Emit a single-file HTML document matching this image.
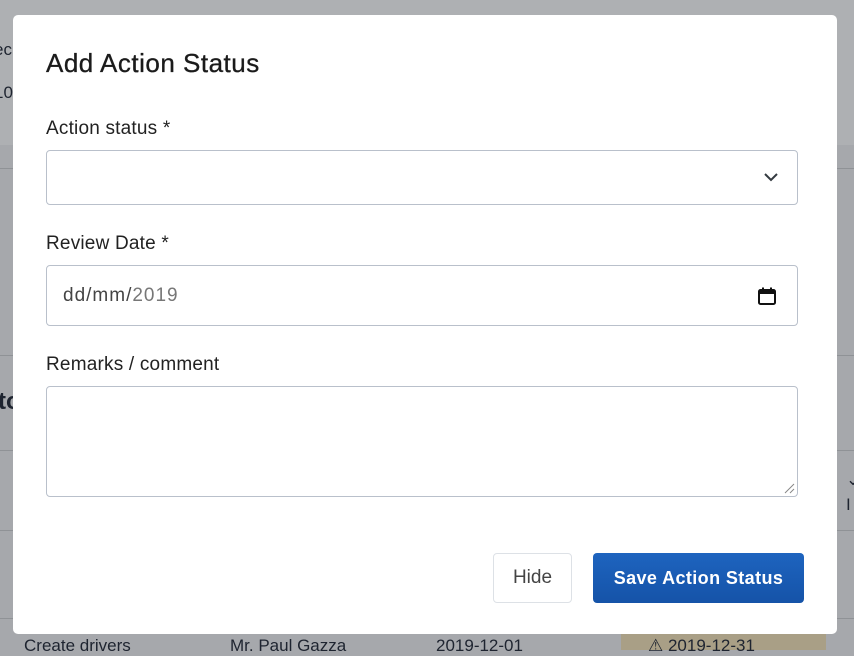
<!DOCTYPE html>
<html><head><meta charset="utf-8"><style>
*{box-sizing:border-box;margin:0;padding:0}
body{width:854px;height:650px;overflow:hidden;background:#a6a8ac;font-family:"Liberation Sans",sans-serif;position:relative;color:#212529}
.bg{position:absolute;color:#1e2430;font-size:17px}
.line{position:absolute;left:0;width:854px;height:1px;background:#8f9296}
.modal{position:absolute;left:13px;top:15px;width:824px;height:619px;background:#fff;border-radius:5px}
h1{position:absolute;left:33px;top:33px;font-size:26px;font-weight:normal;letter-spacing:0.5px;color:#1b1b1b;-webkit-text-stroke:0.3px #1b1b1b}
label{position:absolute;left:33px;font-size:19px;letter-spacing:0.2px;color:#222}
.f{position:absolute;left:33px;width:752px;border:1px solid #b9c0cb;border-radius:4px;background:#fff}
.btn{position:absolute;top:538px;height:50px;border-radius:4px;font-size:19px;display:flex;align-items:center;justify-content:center}
</style></head><body>
<div style="position:absolute;left:0;top:0;width:854px;height:145px;background:#aeb0b3"></div>
<div class="line" style="top:168px"></div>
<div class="line" style="top:355px"></div>
<div class="line" style="top:450px"></div>
<div class="line" style="top:530px"></div>
<div class="line" style="top:618px"></div>
<div class="bg" style="left:-6px;top:40px">ec</div>
<div class="bg" style="left:-6px;top:83px">10</div>
<div class="bg" style="left:-2px;top:388px;font-size:24px;font-weight:bold">to</div>
<div class="bg" style="left:24px;top:636px">Create drivers</div>
<div class="bg" style="left:230px;top:636px">Mr. Paul Gazza</div>
<div class="bg" style="left:436px;top:636px">2019-12-01</div>
<div style="position:absolute;left:621px;top:630px;width:205px;height:20px;background:#a99f86"></div>
<div class="bg" style="left:648px;top:636px">⚠ 2019-12-31</div>
<div class="bg" style="left:846px;top:470px">⌄</div>
<div class="bg" style="left:846px;top:495px">I</div>
<div class="modal">
<h1>Add Action Status</h1>
<label style="top:103px">Action status *</label>
<div class="f" style="top:135px;height:55px">
<svg style="position:absolute;right:18px;top:20px" width="16" height="12" viewBox="0 0 16 12"><path d="M2 3l6 6 6-6" fill="none" stroke="#343a40" stroke-width="2"/></svg></div>
<label style="top:218px">Review Date *</label>
<div class="f" style="top:250px;height:61px">
<span style="position:absolute;left:16px;top:19px;font-size:19px;letter-spacing:1px;color:#444">dd/mm/<span style="color:#777">2019</span></span>
<svg style="position:absolute;right:20px;top:20px" width="20" height="20" viewBox="0 0 20 20"><rect x="2" y="4" width="16" height="14" rx="1.5" fill="none" stroke="#111" stroke-width="2"/><rect x="2" y="4" width="16" height="4" fill="#111"/><rect x="5" y="1.5" width="2" height="3" fill="#111"/><rect x="13" y="1.5" width="2" height="3" fill="#111"/></svg></div>
<label style="top:339px">Remarks / comment</label>
<div class="f" style="top:371px;height:111px">
<svg style="position:absolute;right:2px;bottom:2px" width="12" height="12" viewBox="0 0 12 12"><path d="M11 2L2 11M11 7L7 11" stroke="#888" stroke-width="1"/></svg></div>
<div class="btn" style="left:480px;width:79px;border:1px solid #dde1e6;color:#444">Hide</div>
<div class="btn" style="left:580px;width:211px;background:linear-gradient(#1e64bf,#1553a8);color:#fff;font-weight:bold;font-size:18px;letter-spacing:0.4px">Save Action Status</div>
</div>
</body></html>
